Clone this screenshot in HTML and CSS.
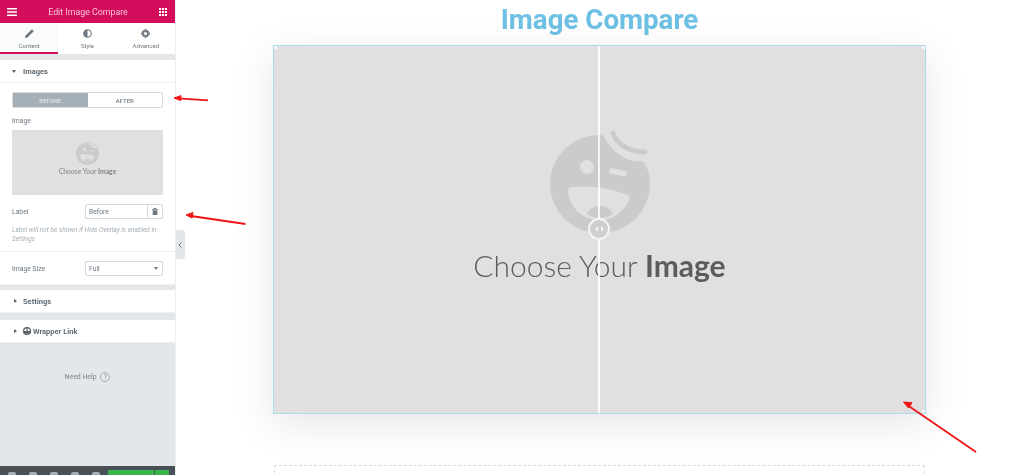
FILE: index.html
```html
<!DOCTYPE html>
<html lang="en">
<head>
    <meta charset="UTF-8">
    <title>Edit Image Compare</title>
    <link rel="stylesheet" href="styles.css">
</head>
<body>
    <div class="editor">
        <!-- Side panel -->
        <aside class="panel">
            <header class="panel-head">
                <svg width="10" height="8" viewBox="0 0 10 8"><path d="M0 0h10v1.6H0zM0 3.2h10v1.6H0zM0 6.4h10V8H0z" fill="#fff"/></svg>
                <span>Edit Image Compare</span>
                <svg width="8" height="8" viewBox="0 0 10 10"><path d="M0 0h2.6v2.6H0zM3.7 0h2.6v2.6H3.7zM7.4 0H10v2.6H7.4zM0 3.7h2.6v2.6H0zM3.7 3.7h2.6v2.6H3.7zM7.4 3.7H10v2.6H7.4zM0 7.4h2.6V10H0zM3.7 7.4h2.6V10H3.7zM7.4 7.4H10V10H7.4z" fill="#fff"/></svg>
            </header>
            <nav class="tabs">
                <div class="tab tab-active">
                    <svg width="9" height="9" viewBox="0 0 10 10"><path d="M0 10l.6-2.8L7 .8a1 1 0 0 1 1.4 0l.8.8a1 1 0 0 1 0 1.4L2.8 9.4z" fill="#6d7882"/></svg>
                    <span>Content</span>
                </div>
                <div class="tab">
                    <svg width="9" height="9" viewBox="0 0 10 10"><circle cx="5" cy="5" r="4.2" fill="none" stroke="#6d7882" stroke-width="1.2"/><path d="M5 .8a4.2 4.2 0 0 0 0 8.4z" fill="#6d7882"/></svg>
                    <span>Style</span>
                </div>
                <div class="tab">
                    <svg width="9" height="9" viewBox="0 0 10 10"><circle cx="5" cy="5" r="2.6" fill="none" stroke="#6d7882" stroke-width="1.8"/><path d="M4 0h2v2H4zM4 8h2v2H4zM0 4h2v2H0zM8 4h2v2H8zM1 2.4L2.4 1l1.2 1.2-1.4 1.4zM7.6 1L9 2.4 7.8 3.6 6.4 2.2zM1 7.6l1.2-1.2 1.4 1.4L2.4 9zM7.8 6.4L9 7.6 7.6 9 6.2 7.8z" fill="#6d7882"/></svg>
                    <span>Advanced</span>
                </div>
            </nav>

            <section class="section section-open">
                <div class="section-title"><i class="caret-down"></i>Images</div>
                <div class="section-body">
                    <div class="switch">
                        <span class="switch-item switch-on">BEFORE</span>
                        <span class="switch-item">AFTER</span>
                    </div>
                    <div class="field-label">Image</div>
                    <div class="media">
                        <svg width="23" height="24" viewBox="0 0 100 103"><use href="#face"/></svg>
                        <div class="media-text">Choose Your <b>Image</b></div>
                    </div>
                    <div class="row">
                        <span class="field-label">Label</span>
                        <div class="input-group">
                            <span class="input-text">Before</span>
                            <span class="input-btn">
                                <svg width="6" height="7" viewBox="0 0 7 8"><path d="M0 1h2V0h3v1h2v1H0zM.8 2.6h5.4V8H.8z" fill="#6d7882"/></svg>
                            </span>
                        </div>
                    </div>
                    <p class="note">Label will not be shown if Hide Overlay is enabled in Settings</p>
                    <div class="row row-size">
                        <span class="field-label">Image Size</span>
                        <div class="select-box"><span>Full</span><i class="caret-down caret-grey"></i></div>
                    </div>
                </div>
            </section>

            <section class="section section-settings">
                <div class="section-title"><i class="caret-right"></i>Settings</div>
            </section>
            <section class="section section-link">
                <div class="section-title"><i class="caret-right"></i><svg class="link-icon" width="8" height="8" viewBox="0 0 8 8"><circle cx="4" cy="4" r="3.4" fill="none" stroke="#556068" stroke-width="1.2"/><path d="M.6 4h6.8v2.4H.6zM3.4 1h1.2v3H3.4z" fill="#556068"/></svg>Wrapper Link</div>
            </section>

            <div class="help">Need Help <span class="help-icon">?</span></div>

            <footer class="panel-foot">
                <div class="foot-icons"><i></i><i></i><i></i><i></i><i></i></div>
                <div class="publish"><span class="publish-main"></span><span class="publish-more"></span></div>
            </footer>
        </aside>
        <div class="collapse">
            <svg width="4" height="6" viewBox="0 0 4 6"><path d="M3.4.5L1 3l2.4 2.5" fill="none" stroke="#6d7882" stroke-width="1"/></svg>
        </div>

        <!-- Preview -->
        <main class="preview">
            <h1 class="title">Image Compare</h1>
            <div class="compare">
                <svg class="face-big" width="100" height="103" viewBox="0 0 100 103">
                    <defs>
                        <g id="face">
                            <path d="M50 5C22 5 0 27 0 54s22 49 50 49 50-22 50-49c0-8-2-16-6-21-2-3-6-1-10-2C72 29 62 20 56 10c-2-4-3-5-6-5z" fill="#cbcbcb"/>
                            <path d="M63 3c4 11 15 19 32 19" fill="none" stroke="#cbcbcb" stroke-width="5" stroke-linecap="round"/>
                            <circle cx="37" cy="37" r="7" fill="#e0e0e0"/>
                            <path d="M62 41l12 2.5" stroke="#e0e0e0" stroke-width="5.5" stroke-linecap="round"/>
                            <path d="M21 57c20-2 40 1 57 8 2 1 2 3 1 5-6 14-18 21-32 20C31 89 19 76 18 60c0-2 1-3 3-3z" fill="#e0e0e0"/>
                            <path d="M37 84c1-5 7-8 13-8s11 3 13 8c-8 5-18 6-26 0z" fill="#cbcbcb"/>
                        </g>
                    </defs>
                    <use href="#face"/>
                </svg>
                <div class="compare-text">Choose Your <b>Image</b></div>
                <div class="divider"></div>
                <div class="handle"><i class="tri-left"></i><i class="tri-right"></i></div>
                <i class="corner corner-tl"></i><i class="corner corner-tr"></i><i class="corner corner-br"></i>
            </div>
            <div class="drop-area"></div>
        </main>

        <!-- Red annotation arrows -->
        <svg class="arrows" width="1024" height="475" viewBox="0 0 1024 475">
            <g stroke="#f01414" stroke-width="1.8" fill="#f01414">
                <path d="M178 98.4l30 2"/><path d="M174 98l7-2.4-.3 5z" stroke-width="1"/>
                <path d="M191 216l54.500 8"/><path d="M186 215l7-2.500-.8 5.500z" stroke-width="1"/>
                <path d="M908 405.500l68 46.500"/><path d="M903.500 402l8.500.8-3.500 5.200z" stroke-width="1"/>
            </g>
        </svg>
    </div>
</body>
</html>
```

FILE: styles.css
```css
/* Reset some default styles */
* {
    margin: 0;
    padding: 0;
    box-sizing: border-box;
}

body {
    font-family: Roboto, "Liberation Sans", sans-serif;
    background-color: #fff;
    overflow: hidden;
}

.editor {
    position: relative;
    display: flex;
    width: 1024px;
    height: 475px;
    overflow: hidden;
}

/* Side panel */
.panel {
    display: flex;
    flex-direction: column;
    flex: 0 0 175px;
    height: 475px;
    background-color: #e4e7ea;
    color: #6d7882;
    filter: blur(0.35px);
}

.panel-head {
    display: flex;
    align-items: center;
    justify-content: space-between;
    height: 23px;
    flex: none;
    padding: 0 8px 0 7px;
    background-color: #d30c5c;
    color: #f7c4d8;
    font-size: 8.8px;
}

.tabs {
    display: flex;
    height: 31px;
    flex: none;
    background-color: #fff;
}

.tab {
    display: flex;
    flex: 1;
    flex-direction: column;
    align-items: center;
    gap: 4px;
    padding-top: 6px;
    font-size: 6px;
}

.tab-active {
    background-color: #fafbfb;
    border-bottom: 2px solid #d30c5c;
}

.section {
    flex: none;
    margin-top: 6px;
    background-color: #fff;
    border-bottom: 1px solid #eef0f1;
}

.section-settings {
    margin-top: 5px;
}

.section-link {
    margin-top: 7px;
}

.section-title {
    display: flex;
    align-items: center;
    height: 22px;
    padding-left: 12px;
    font-size: 7.5px;
    font-weight: 700;
    color: #5f6b74;
}

.section-open .section-title {
    height: 23px;
    border-bottom: 1px solid #eef0f1;
}

.caret-down {
    width: 0;
    height: 0;
    margin-right: 7px;
    border-left: 2.500px solid transparent;
    border-right: 2.500px solid transparent;
    border-top: 3px solid #556068;
}

.caret-right {
    width: 0;
    height: 0;
    margin: 0 6px 0 2px;
    border-top: 2.500px solid transparent;
    border-bottom: 2.500px solid transparent;
    border-left: 3px solid #556068;
}

.caret-grey {
    margin-right: 0;
    border-top-color: #6d7882;
}

.link-icon {
    margin-right: 2px;
}

.section-body {
    height: 201px;
    padding: 9px 12px 0;
}

.switch {
    display: flex;
    height: 16px;
    border: 1px solid #d5dadf;
    border-radius: 2px;
    font-size: 6px;
    font-weight: 500;
}

.switch-item {
    display: flex;
    flex: 1;
    align-items: center;
    justify-content: center;
}

.switch-on {
    background-color: #a4afb7;
    color: #e4e7ea;
}

.field-label {
    font-size: 6.8px;
    color: #6d7882;
}

.section-body > .field-label {
    margin-top: 8px;
    line-height: 10px;
}

.media {
    display: flex;
    flex-direction: column;
    align-items: center;
    height: 65px;
    margin-top: 4px;
    padding-top: 11px;
    background-color: #e0e0e0;
}

.media-text {
    margin-top: 2px;
    font-family: Lato, sans-serif;
    font-size: 6.8px;
    color: #858585;
}

.row {
    display: flex;
    align-items: center;
    justify-content: space-between;
    margin-top: 9px;
}

.input-group {
    display: flex;
    width: 78px;
    height: 15px;
    border: 1px solid #d5dadf;
    border-radius: 2px;
    font-size: 6.8px;
}

.input-text {
    flex: 1;
    padding: 3px;
    color: #6d7882;
}

.input-btn {
    display: flex;
    align-items: center;
    justify-content: center;
    width: 15px;
    border-left: 1px solid #d5dadf;
}

.note {
    margin-top: 7px;
    font-size: 6.5px;
    font-style: italic;
    line-height: 8.500px;
    color: #a4afb7;
}

.row-size {
    margin: 8px -12px 0;
    padding: 9px 12px 0;
    border-top: 1px solid #eef0f1;
}

.select-box {
    display: flex;
    align-items: center;
    justify-content: space-between;
    width: 78px;
    height: 15px;
    padding: 0 4px 0 3px;
    border: 1px solid #d5dadf;
    border-radius: 2px;
    font-size: 6.8px;
}

.help {
    margin-top: 28px;
    text-align: center;
    font-size: 6.9px;
    line-height: 12px;
    font-weight: 500;
    color: #8a949c;
}

.help-icon {
    display: inline-block;
    width: 10px;
    height: 10px;
    margin-left: 2px;
    border: 1px solid #a4afb7;
    border-radius: 50%;
    font-size: 6.5px;
    line-height: 8px;
    font-weight: 400;
    vertical-align: middle;
}

.panel-foot {
    display: flex;
    align-items: flex-start;
    justify-content: space-between;
    height: 9px;
    flex: none;
    margin-top: auto;
    padding: 0 6px 0 8px;
    background-color: #495157;
}

.foot-icons {
    display: flex;
    gap: 13px;
    padding-top: 6px;
}

.foot-icons i {
    width: 8px;
    height: 3px;
    border-radius: 2px 2px 0 0;
    background-color: #a4afb7;
}

.publish {
    display: flex;
    gap: 1px;
    height: 9px;
    padding-top: 4px;
}

.publish-main {
    width: 46px;
    background-color: #39b54a;
}

.publish-more {
    width: 14px;
    background-color: #39b54a;
}

.collapse {
    display: flex;
    align-items: center;
    justify-content: center;
    flex: none;
    width: 10px;
    height: 29px;
    margin-top: 230px;
    background-color: #e4e7ea;
    border-radius: 0 3px 3px 0;
}

/* Preview */
.preview {
    display: flex;
    flex-direction: column;
    align-items: center;
    flex: 1;
    margin-left: -10px;
    padding-left: 97px;
    padding-right: 98px;
    border-left: 1px solid #eceeef;
}

.title {
    flex: none;
    height: 45px;
    padding-top: 3px;
    font-size: 27.700px;
    line-height: 34px;
    font-weight: 700;
    color: #6ec1e4;
    filter: blur(0.3px);
}

.compare {
    position: relative;
    display: flex;
    flex-direction: column;
    align-items: center;
    flex: none;
    width: 653px;
    height: 369px;
    padding-top: 84px;
    background-color: #e0e0e0;
    border: 1px solid #a9dcef;
    box-shadow: 0 10px 40px rgba(0, 0, 0, 0.1);
}

.face-big {
    flex: none;
}

.compare-text {
    margin-top: 14px;
    font-family: Lato, sans-serif;
    font-size: 30px;
    line-height: 36px;
    font-weight: 300;
    color: #5c5c5c;
    filter: blur(0.3px);
}

.compare-text b {
    font-weight: 700;
}

.divider {
    position: absolute;
    top: 0;
    bottom: 0;
    left: 324px;
    width: 2px;
    background-color: rgba(255, 255, 255, 0.85);
}

.handle {
    position: absolute;
    top: 172px;
    left: 314px;
    display: flex;
    align-items: center;
    justify-content: center;
    gap: 3px;
    width: 22px;
    height: 22px;
    border: 2px solid #f4f4f4;
    border-radius: 50%;
    background-color: #cfcfcf;
}

.tri-left {
    border-top: 3px solid transparent;
    border-bottom: 3px solid transparent;
    border-right: 3px solid #f4f4f4;
}

.tri-right {
    border-top: 3px solid transparent;
    border-bottom: 3px solid transparent;
    border-left: 3px solid #f4f4f4;
}

.corner {
    position: absolute;
    width: 3px;
    height: 3px;
    background-color: #f6f6f6;
}

.corner-tl {
    top: 0;
    left: 0;
}

.corner-tr {
    top: 0;
    right: 0;
}

.corner-br {
    right: 0;
    bottom: 0;
}

.drop-area {
    flex: none;
    width: 651px;
    height: 40px;
    margin-top: 51px;
    border: 1px dashed #d5dadf;
}

.arrows {
    position: absolute;
    top: 0;
    left: 0;
    pointer-events: none;
}
```
